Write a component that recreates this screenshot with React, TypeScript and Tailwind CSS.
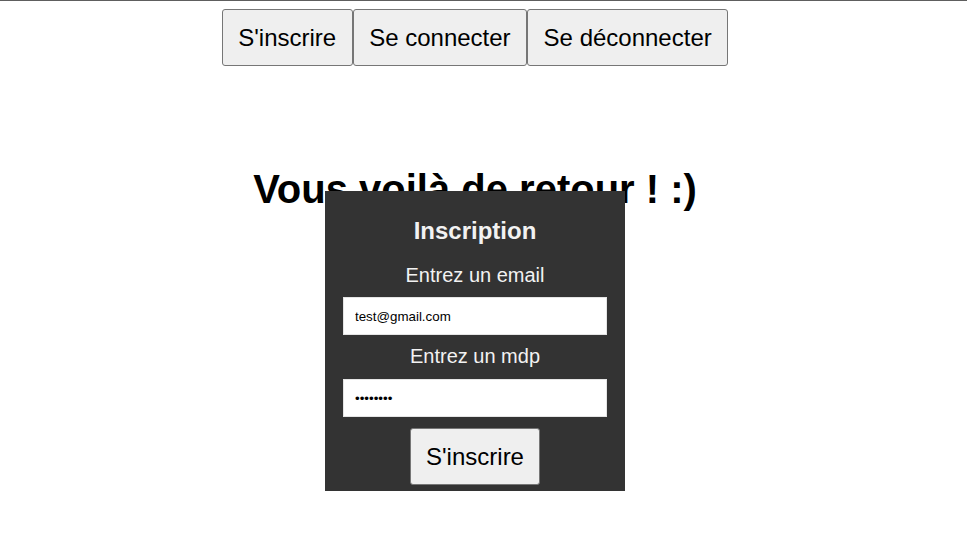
import { useState } from 'react';

const buttonClass =
  "bg-[#efefef] border border-[#767676] rounded-[3px] px-[15.5px] py-[14px] text-[24px] leading-[27px] text-black";

function SignupModal() {
  const [email, setEmail] = useState('test@gmail.com');
  const [password, setPassword] = useState('12345678');

  return (
    <div className="absolute top-[190px] left-1/2 -translate-x-1/2 w-[300px] h-[300px] bg-[#333333] text-[#f2f2f2] flex flex-col items-center pt-[26px]">
      <h2 className="text-[24px] leading-[28px] font-bold">Inscription</h2>
      <label className="mt-[19px] text-[20px] leading-[23px]">Entrez un email</label>
      <input
        type="email"
        value={email}
        onChange={(e) => setEmail(e.target.value)}
        className="mt-[10px] w-[264px] h-[38px] bg-white border border-[#e5e5e5] px-[11px] text-[13.33px] text-black outline-none"
      />
      <label className="mt-[10px] text-[20px] leading-[23px]">Entrez un mdp</label>
      <input
        type="password"
        value={password}
        onChange={(e) => setPassword(e.target.value)}
        className="mt-[11px] w-[264px] h-[38px] bg-white border border-[#e5e5e5] px-[11px] text-[13.33px] text-black outline-none"
      />
      <button className={`mt-[11px] ${buttonClass}`}>S'inscrire</button>
    </div>
  );
}

export default function App() {
  return (
    <div
      className="min-h-[544px] bg-white border-t border-[#5e5e5e] pr-[17px]"
      style={{ fontFamily: '"Liberation Sans", Arial, sans-serif' }}
    >
      <div className="relative">
        <div className="flex justify-center pt-2">
          <button className={buttonClass}>S'inscrire</button>
          <button className={buttonClass}>Se connecter</button>
          <button className={buttonClass}>Se déconnecter</button>
        </div>
        <h1 className="mt-[100px] text-center text-[40px] leading-[46px] font-bold text-black">
          Vous voilà de retour ! :)
        </h1>
        <SignupModal />
      </div>
    </div>
  );
}
